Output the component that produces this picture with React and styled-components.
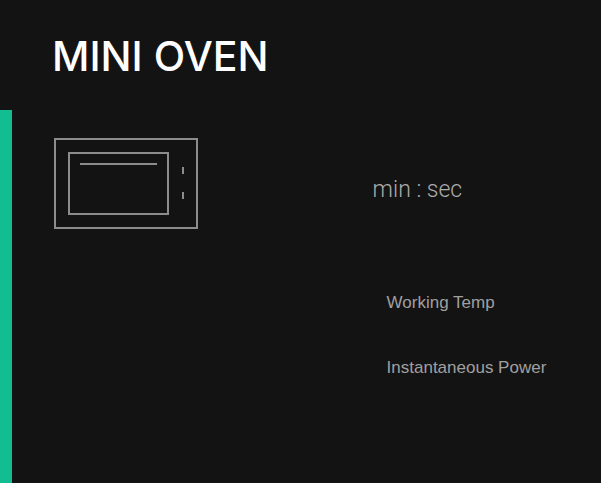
import React from 'react';
import styled, { createGlobalStyle } from 'styled-components';

const GlobalStyle = createGlobalStyle`
  * { box-sizing: border-box; }
  body { margin: 0; background: #131313; font-family: "Liberation Sans", Arial, sans-serif; }
`;

const Page = styled.main`
  min-height: 100vh;
  display: flex;
  flex-direction: column;
  background: #131313;
  color: #a0a0a0;
`;

const Header = styled.header`
  height: 110px;
  padding: 36px 0 0 52px;
`;

const Title = styled.h1`
  margin: 0;
  font-family: Inter, sans-serif;
  font-size: 41px;
  line-height: 40px;
  font-weight: 500;
  color: #fff;
  white-space: nowrap;
`;

const Panel = styled.section`
  flex: 1;
  display: grid;
  grid-template-columns: 53fr 38fr;
  padding: 28px 0 0 42px;
  border-left: 12px solid #12be91;
`;

const OvenIcon = styled.svg`
  display: block;
  width: 144px;
  height: 91px;
  fill: none;
  stroke: #8c8c8c;
  stroke-width: 2;
`;

const Readings = styled.div`
  display: flex;
  flex-direction: column;
  align-items: flex-start;
  padding-top: 36px;
  white-space: nowrap;
`;

const Timer = styled.div`
  font-family: Roboto, sans-serif;
  font-weight: 300;
  font-size: 23px;
  line-height: 32px;
  color: #acacac;
`;

const Labels = styled.div`
  display: flex;
  flex-direction: column;
  gap: 41px;
  margin-top: 85px;
  padding-left: 14px;
`;

const Label = styled.div`
  font-size: 17px;
  line-height: 24px;
`;

export default function App() {
  return (
    <>
      <GlobalStyle />
      <Page>
        <Header><Title>MINI OVEN</Title></Header>
        <Panel>
          <OvenIcon viewBox="0 0 144 91" aria-label="Mini oven" role="img">
            <path d="M1 1H143V90H1Z M15 15H114V76H15Z M26 26H103 M129 29V36 M129 54V61" />
          </OvenIcon>
          <Readings>
            <Timer>min : sec</Timer>
            <Labels>
              <Label>Working Temp</Label>
              <Label>Instantaneous Power</Label>
            </Labels>
          </Readings>
        </Panel>
      </Page>
    </>
  );
}
